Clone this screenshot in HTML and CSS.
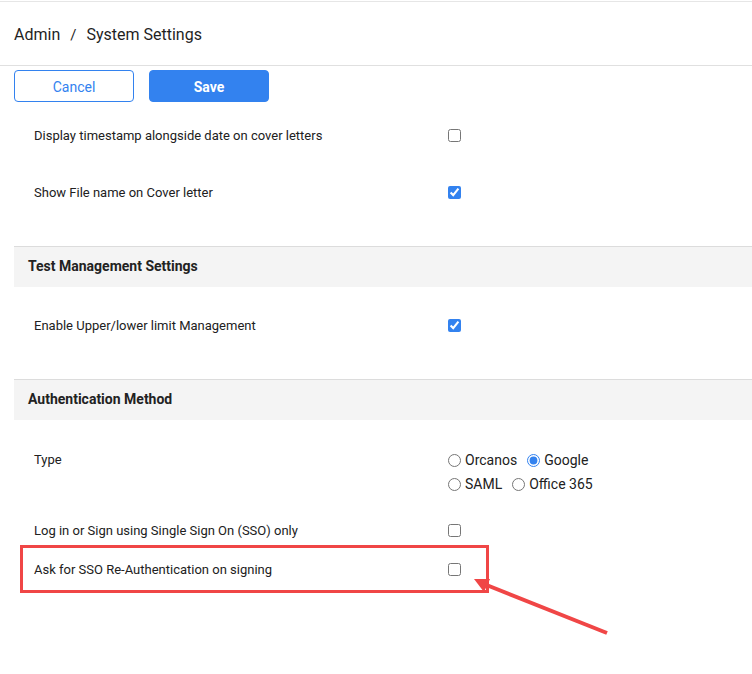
FILE: index.html
```html
<!DOCTYPE html>
<html lang="en">
<head>
  <meta charset="UTF-8">
  <title>System Settings</title>
  <link rel="stylesheet" href="styles.css">
</head>
<body>

  <header class="topbar">
    <span>Admin</span>
    <span class="sep">/</span>
    <span>System Settings</span>
  </header>

  <div class="toolbar">
    <button class="btn btn-outline">Cancel</button>
    <button class="btn btn-primary">Save</button>
  </div>

  <div class="settings">
    <div class="section-body first">
      <div class="row">
        <label>Display timestamp alongside date on cover letters</label>
        <div><input type="checkbox"></div>
      </div>
      <div class="row">
        <label>Show File name on Cover letter</label>
        <div><input type="checkbox" checked></div>
      </div>
    </div>

    <div class="section-head">Test Management Settings</div>
    <div class="section-body">
      <div class="row">
        <label>Enable Upper/lower limit Management</label>
        <div><input type="checkbox" checked></div>
      </div>
    </div>

    <div class="section-head">Authentication Method</div>
    <div class="section-body last">
      <div class="row type-row">
        <label>Type</label>
        <div class="radios">
          <div class="radio-line">
            <label class="radio"><input type="radio" name="auth">Orcanos</label>
            <label class="radio"><input type="radio" name="auth" checked>Google</label>
          </div>
          <div class="radio-line">
            <label class="radio"><input type="radio" name="auth">SAML</label>
            <label class="radio"><input type="radio" name="auth">Office 365</label>
          </div>
        </div>
      </div>
      <div class="row">
        <label>Log in or Sign using Single Sign On (SSO) only</label>
        <div><input type="checkbox"></div>
      </div>
      <div class="row marked">
        <label>Ask for SSO Re-Authentication on signing</label>
        <div><input type="checkbox"></div>
      </div>
    </div>
  </div>

  <!-- annotation arrow -->
  <svg class="arrow" width="752" height="674" viewBox="0 0 752 674">
    <line x1="607" y1="633" x2="484" y2="584" stroke="#f04646" stroke-width="4"/>
    <polygon points="474,579 490,579 484,592" fill="#f04646"/>
  </svg>

</body>
</html>
```

FILE: styles.css
```css
*, *::before, *::after {
  box-sizing: border-box;
}
body {
  font-family: Roboto, 'Liberation Sans', sans-serif;
  color: #212121;
  background: #fff;
  margin: 0;
  padding: 0;
  position: relative;
  height: 674px;
  overflow: hidden;
}
.topbar {
  margin-top: 1px;
  height: 65px;
  border-top: 1px solid #e6e6e6;
  border-bottom: 1px solid #e0e0e0;
  padding: 2px 0 0 14px;
  display: flex;
  align-items: center;
  font-size: 16px;
  color: #1f1f1f;
}
.topbar .sep {
  margin: 0 10px 0 10px;
  font-size: 15px;
}
.toolbar {
  display: flex;
  gap: 15px;
  padding: 4px 14px 0;
}
.btn {
  width: 120px;
  height: 32px;
  border-radius: 4px;
  font-family: Roboto, sans-serif;
  font-size: 14px;
  padding-top: 2px;
  cursor: pointer;
}
.btn-outline {
  background: #fff;
  border: 1px solid #3382ef;
  color: #3382ef;
}
.btn-primary {
  background: #3382ef;
  border: 1px solid #3382ef;
  color: #fff;
  font-weight: bold;
}
.settings {
  margin-left: 14px;
}
.section-head {
  background: #f4f4f4;
  border-top: 1px solid #dcdcdc;
  height: 41px;
  padding: 0 0 3px 14px;
  display: flex;
  align-items: center;
  font-size: 14px;
  font-weight: bold;
  color: #222;
}
.section-body {
  display: flex;
  flex-direction: column;
  gap: 18px;
  padding: 19px 0 34px;
}
.section-body.first {
  padding-top: 14px;
}
.section-body.last {
  gap: 0;
  padding-top: 17px;
}
.row {
  display: grid;
  grid-template-columns: 414px 1fr;
  height: 39px;
  padding: 11px 0 11px 20px;
  font-size: 13px;
  line-height: 17px;
}
.row input[type=checkbox] {
  display: block;
  margin: 2px 0 0;
  width: 13px;
  height: 13px;
  accent-color: #3382ef;
}
.type-row {
  height: 70px;
  line-height: 24px;
  margin-bottom: 4px;
}
.radios {
  font-size: 14px;
}
.radio-line {
  display: flex;
  height: 24px;
  align-items: center;
}
.radio {
  display: flex;
  align-items: center;
  margin-right: 10px;
}
.radio input {
  margin: 0 4px 0 0;
  width: 13px;
  height: 13px;
  accent-color: #3382ef;
}
.marked {
  position: relative;
}
.marked::after {
  content: "";
  position: absolute;
  left: 6px;
  top: -5px;
  width: 469px;
  height: 48px;
  border: 3px solid #f04646;
}
.arrow {
  position: absolute;
  top: 0;
  left: 0;
  pointer-events: none;
}
```
